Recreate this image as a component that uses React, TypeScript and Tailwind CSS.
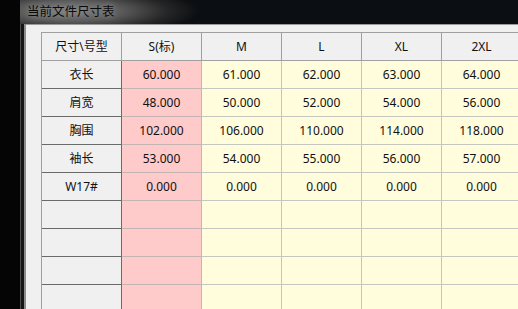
import React from 'react';

const sizes = ['S(标)', 'M', 'L', 'XL', '2XL'];

const rows: { label: string; values: string[] }[] = [
  { label: '衣长', values: ['60.000', '61.000', '62.000', '63.000', '64.000'] },
  { label: '肩宽', values: ['48.000', '50.000', '52.000', '54.000', '56.000'] },
  { label: '胸围', values: ['102.000', '106.000', '110.000', '114.000', '118.000'] },
  { label: '袖长', values: ['53.000', '54.000', '55.000', '56.000', '57.000'] },
  { label: 'W17#', values: ['0.000', '0.000', '0.000', '0.000', '0.000'] },
  { label: '', values: ['', '', '', '', ''] },
  { label: '', values: ['', '', '', '', ''] },
  { label: '', values: ['', '', '', '', ''] },
  { label: '', values: ['', '', '', '', ''] },
];

const font = { fontFamily: '"Noto Sans", "Noto Sans CJK SC", sans-serif' };

const App: React.FC = () => {
  return (
    <div className="flex h-[309px] w-[518px] overflow-hidden bg-[#050505] text-[12px] text-[#111]" style={font}>
      <div className="w-[20px] shrink-0 bg-[#050505]" />
      <div className="flex min-w-0 flex-1 flex-col">
        {/* title bar */}
        <div className="flex h-[24px] shrink-0 items-center bg-[radial-gradient(ellipse_130px_26px_at_50px_11px,#7c7c7c_0%,#5a5a5a_40%,#262626_75%,#0b0e12_100%)] pl-[7px]">
          <span className="text-[12.5px] leading-none text-[#0a0a0a] [text-shadow:0_0_6px_#a0a0a0]">当前文件尺寸表</span>
        </div>
        <div className="flex min-h-0 flex-1">
          {/* left frame */}
          <div className="flex w-[6px] shrink-0">
            <div className="w-[1px] bg-[#4a4a4a]" />
            <div className="w-[3px] bg-[#161616]" />
            <div className="w-[2px] bg-[#8c8c8c]" />
          </div>
          <div className="min-w-0 flex-1 overflow-hidden border-t border-[#9a9a9a] bg-[#f0f0f0] pl-[15px] pt-[7px]">
            <div className="w-[481px] border-l border-t border-[#a0a0a0]">
              {/* header */}
              <div className="flex h-[28px]">
                <div className="flex w-[80px] shrink-0 items-center justify-center border-b border-r border-[#a0a0a0] bg-[#f0f0f0]">
                  尺寸\号型
                </div>
                {sizes.map((s) => (
                  <div
                    key={s}
                    className="flex w-[80px] shrink-0 items-center justify-center border-b border-r border-[#a0a0a0] bg-[#f0f0f0]"
                  >
                    {s}
                  </div>
                ))}
              </div>
              {rows.map((row, i) => (
                <div key={i} className="flex h-[28px]">
                  <div className="flex w-[80px] shrink-0 items-center justify-center border-b border-r border-[#6a6a6a] bg-[#f0f0f0]">
                    {row.label}
                  </div>
                  {row.values.map((v, j) => (
                    <div
                      key={j}
                      className={
                        j === 0
                          ? 'flex w-[80px] shrink-0 items-center justify-center border-b border-r border-[#c4b4b4] bg-[#ffcaca]'
                          : 'flex w-[80px] shrink-0 items-center justify-center border-b border-r border-[#c6c6c0] bg-[#fffddc]'
                      }
                    >
                      {v}
                    </div>
                  ))}
                </div>
              ))}
            </div>
          </div>
        </div>
      </div>
    </div>
  );
};

export default App;
